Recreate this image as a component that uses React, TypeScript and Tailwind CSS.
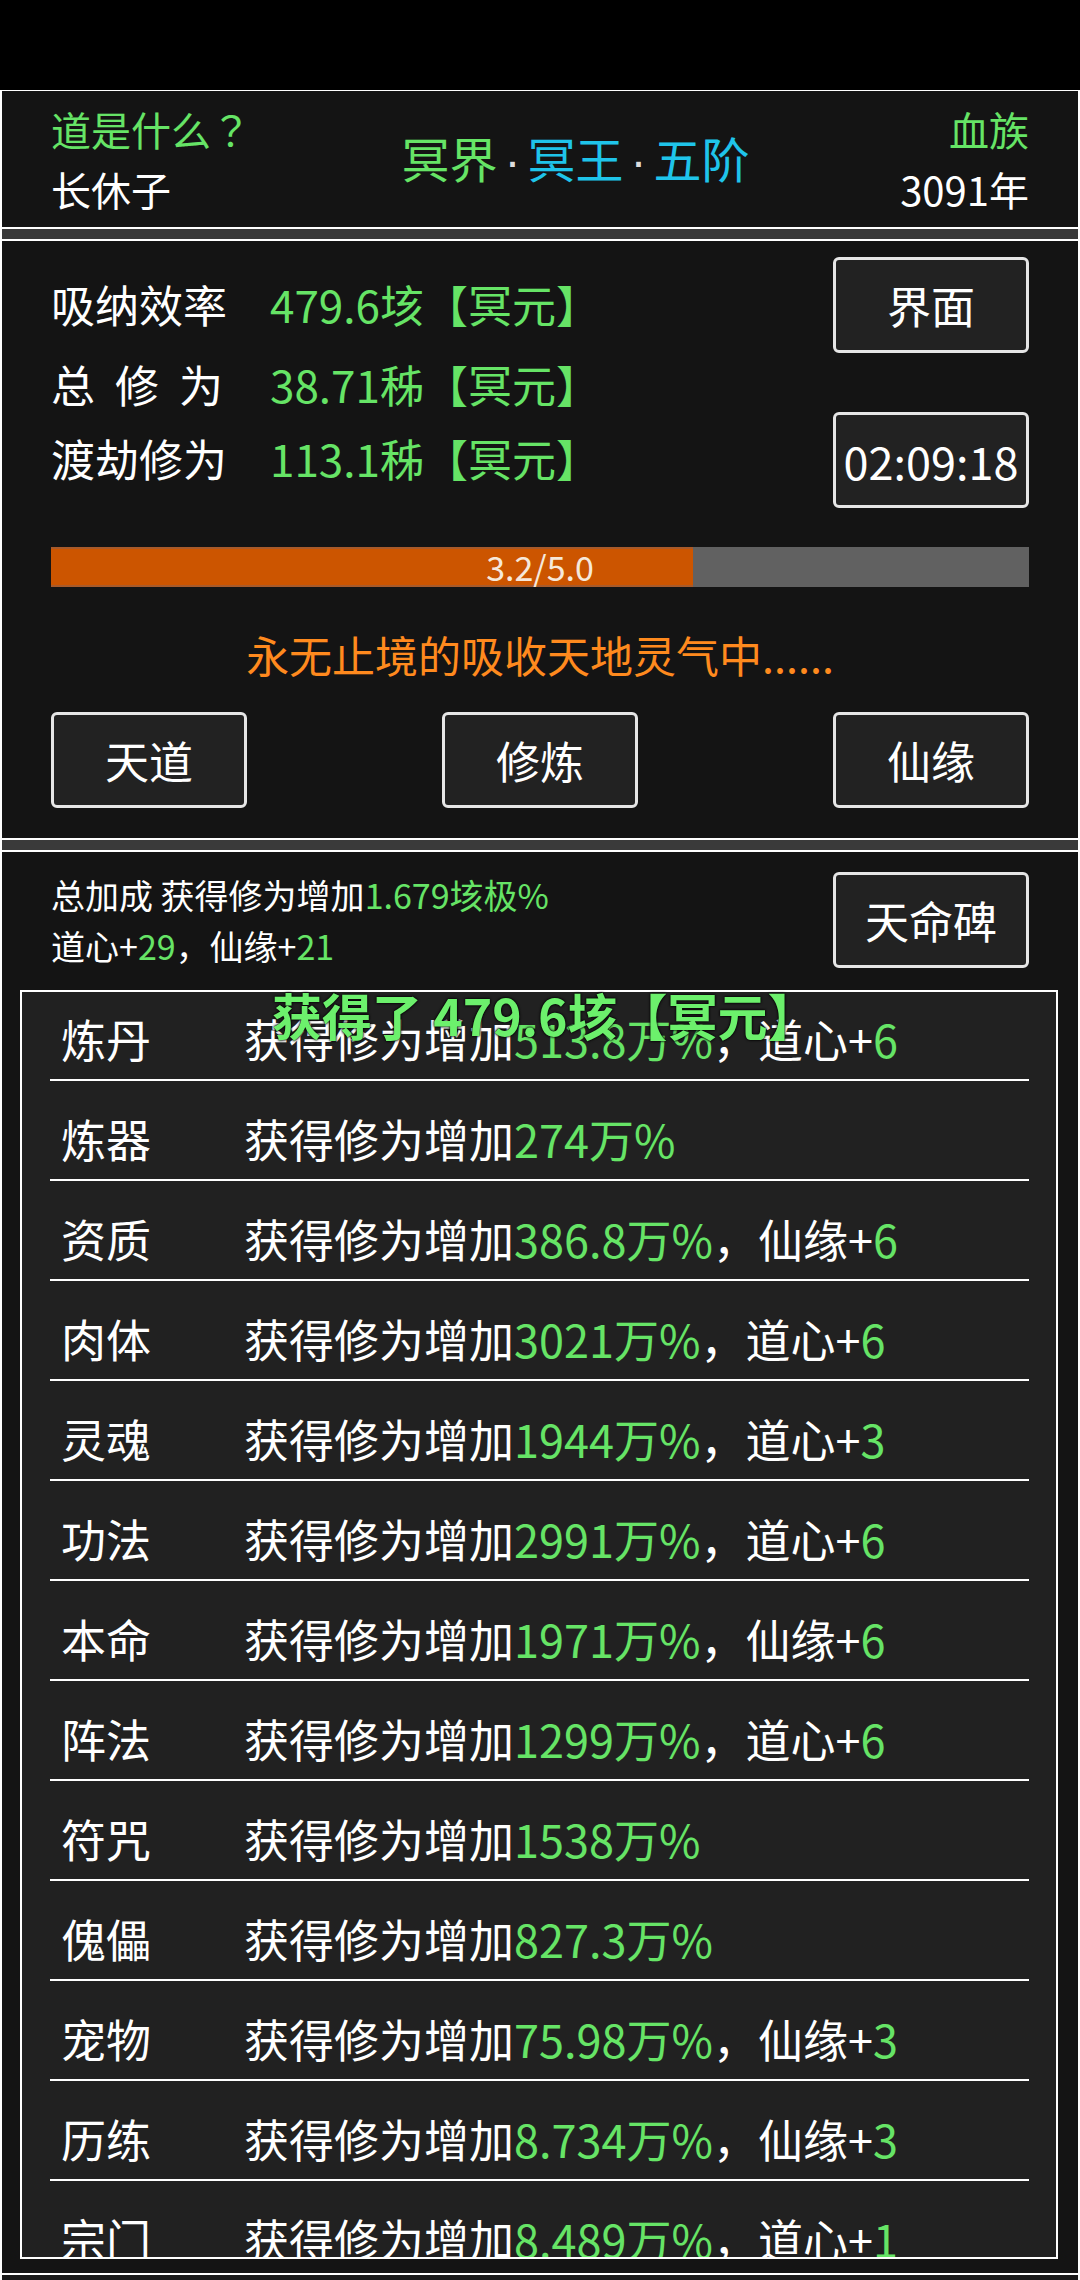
const FONT = "font-['Noto_Sans_CJK_SC','Noto_Sans',sans-serif]";

type Row = { name: string; pct: string; extra?: [string, string] };

const ROWS: Row[] = [
  { name: "炼丹", pct: "513.8万%", extra: ["道心+", "6"] },
  { name: "炼器", pct: "274万%" },
  { name: "资质", pct: "386.8万%", extra: ["仙缘+", "6"] },
  { name: "肉体", pct: "3021万%", extra: ["道心+", "6"] },
  { name: "灵魂", pct: "1944万%", extra: ["道心+", "3"] },
  { name: "功法", pct: "2991万%", extra: ["道心+", "6"] },
  { name: "本命", pct: "1971万%", extra: ["仙缘+", "6"] },
  { name: "阵法", pct: "1299万%", extra: ["道心+", "6"] },
  { name: "符咒", pct: "1538万%" },
  { name: "傀儡", pct: "827.3万%" },
  { name: "宠物", pct: "75.98万%", extra: ["仙缘+", "3"] },
  { name: "历练", pct: "8.734万%", extra: ["仙缘+", "3"] },
  { name: "宗门", pct: "8.489万%", extra: ["道心+", "1"] },
];

function Btn({ label, small }: { label: string; small?: boolean }) {
  return (
    <div className="flex h-[96px] w-[196px] items-center justify-center rounded-[6px] border-[3px] border-[#e6e6e6] bg-[#222222]">
      <span className={small ? "text-[45px] leading-none text-white" : "text-[44px] leading-none text-white"}>{label}</span>
    </div>
  );
}

function Stat({ label, value, spaced }: { label: string; value: string; spaced?: boolean }) {
  return (
    <div className="flex items-center text-[44px] leading-[60px]">
      {spaced ? (
        <span className="flex w-[178px] justify-between pr-[6px] text-white">
          <span>总</span>
          <span>修</span>
          <span>为</span>
        </span>
      ) : (
        <span className="w-[178px] text-white">{label}</span>
      )}
      <span className="ml-[41px] text-[#66e466]">{value}</span>
    </div>
  );
}

function Dot() {
  return <span className="px-[7px] font-['Liberation_Sans',sans-serif] text-[#dddddd]">·</span>;
}

export default function App() {
  return (
    <div className={`w-[1080px] min-h-[2280px] bg-black ${FONT}`}>
      <div className="h-[90px]" />
      <div className="flex flex-col bg-white px-[2px] pt-[1px]">
        {/* header */}
        <div className="flex h-[136px] items-center justify-between bg-[#141414] px-[49px]">
          <div className="flex flex-col text-[40px] leading-[60px]">
            <span className="text-[#66e466]">
              道是什么<span className="font-['Noto_Sans_CJK_TC',sans-serif]">？</span>
            </span>
            <span className="text-white">长休子</span>
          </div>
          <div className="text-[48px] leading-none">
            <span className="text-[#66e466]">冥界</span>
            <Dot />
            <span className="text-[#1fc4ea]">冥王</span>
            <Dot />
            <span className="text-[#1fc4ea]">五阶</span>
          </div>
          <div className="flex flex-col items-end text-[40px] leading-[60px]">
            <span className="text-[#66e466]">血族</span>
            <span className="text-white">3091年</span>
          </div>
        </div>

        <div className="mt-[2px] h-[10px] bg-[#3a3a3a]" />

        {/* cultivation panel */}
        <div className="mt-[2px] flex h-[597px] flex-col bg-[#141414] px-[49px] pt-[16px]">
          <div className="flex justify-between">
            <div className="flex flex-col pt-[17px]">
              <Stat label="吸纳效率" value="479.6垓【冥元】" />
              <div className="mt-[20px]">
                <Stat label="总修为" value="38.71秭【冥元】" spaced />
              </div>
              <div className="mt-[14px]">
                <Stat label="渡劫修为" value="113.1秭【冥元】" />
              </div>
            </div>
            <div className="flex flex-col gap-[59px]">
              <Btn label="界面" />
              <Btn label="02:09:18" small />
            </div>
          </div>

          <div className="relative mt-[39px] h-[40px] bg-[#616161]">
            <div className="h-full w-[65.6%] border-y-2 border-[#a85a2a] bg-[#cc5500]" />
            <div className="absolute inset-0 flex items-center justify-center text-[34px] leading-none text-[#f6e8da]">
              3.2/5.0
            </div>
          </div>

          <div className="mt-[37px] text-center text-[43px] leading-[60px] text-[#ff8a1e]">
            永无止境的吸收天地灵气中......
          </div>

          <div className="mt-[28px] flex justify-between">
            <Btn label="天道" />
            <Btn label="修炼" />
            <Btn label="仙缘" />
          </div>
        </div>

        <div className="mt-[2px] h-[10px] bg-[#3a3a3a]" />

        {/* bonus panel */}
        <div className="relative mt-[2px] flex h-[1421px] flex-col bg-[#141414] pt-[20px]">
          <div className="flex h-[96px] items-center justify-between px-[49px]">
            <div className="flex flex-col text-[34px] leading-[51px] text-white">
              <div>
                总加成 获得修为增加<span className="text-[#66e466]">1.679垓极%</span>
              </div>
              <div>
                道心+<span className="text-[#66e466]">29</span>，仙缘+<span className="text-[#66e466]">21</span>
              </div>
            </div>
            <Btn label="天命碑" />
          </div>

          <div className="ml-[18px] mr-[20px] mt-[22px] h-[1269px] overflow-hidden border-2 border-white bg-[#212121]">
            <div className="mt-[-11px] flex flex-col pl-[28px] pr-[27px]">
              {ROWS.map((r) => (
                <div key={r.name} className="flex flex-col">
                  <div className="flex h-[98px] items-center pt-[16px] text-[45px] leading-none text-white">
                    <span className="w-[194px] pl-[11px]">{r.name}</span>
                    <span>
                      获得修为增加<span className="text-[#66e466]">{r.pct}</span>
                      {r.extra && (
                        <>
                          ，{r.extra[0]}
                          <span className="text-[#66e466]">{r.extra[1]}</span>
                        </>
                      )}
                    </span>
                  </div>
                  <div className="h-[2px] bg-white" />
                </div>
              ))}
            </div>
          </div>

          <div className="pointer-events-none absolute left-[270px] top-[132px] text-[50px] font-bold leading-[60px] text-[#6cf06c] [text-shadow:0_0_3px_#000,0_0_2px_#000]">
            获得了 479.6垓【冥元】
          </div>
        </div>
        <div className="mt-[2px] h-[5px] bg-[#1a1a1a]" />
      </div>
    </div>
  );
}
